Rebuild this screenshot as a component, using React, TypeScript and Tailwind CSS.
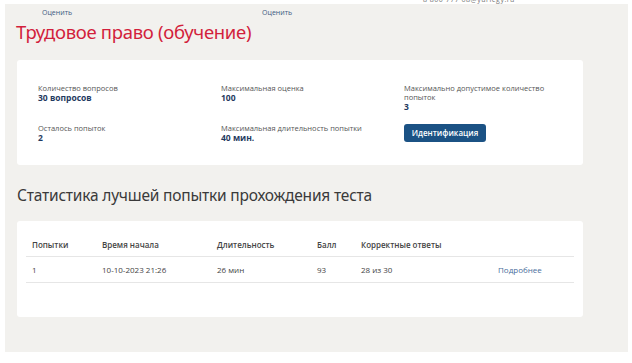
import React from "react";

const info = "font-['Open_Sans',sans-serif]";

function Field({ label, value }: { label: React.ReactNode; value: string }) {
  return (
    <div className="flex flex-col">
      <div className="text-[7.5px] leading-[9px] text-[#555]">{label}</div>
      <div className="text-[8.5px] leading-[10px] font-bold text-[#1f3a60]">{value}</div>
    </div>
  );
}

export default function App() {
  const headers = ["Попытки", "Время начала", "Длительность", "Балл", "Корректные ответы"];
  const row = ["1", "10-10-2023 21:26", "26 мин", "93", "28 из 30"];
  const widths = ["w-[70px]", "w-[115px]", "w-[100px]", "w-[44px]", "w-[137px]"];
  return (
    <div className={`relative w-[632px] h-[363px] bg-white overflow-hidden ${info}`}>
      <div className="absolute left-[423px] top-[-5px] text-[7px] leading-[9px] text-[#777] tracking-[0.5px]">
        8 800 777 68@yurlegy.ru
      </div>
      <div className="relative ml-[5px] mt-[4px] w-[623px] h-[348px] bg-[#f2f1ee]">
        <div className="flex h-[14px] items-end text-[7px] text-[#3b5a82]">
          <span className="ml-[37px]">Оценить</span>
          <span className="ml-[190px]">Оценить</span>
        </div>
        <h1 className="ml-[11px] mt-[3px] text-[18.5px] leading-[22px] text-[#d21f3c] font-['Noto_Sans',sans-serif] tracking-[-0.3px]">
          Трудовое право (обучение)
        </h1>
        <div className="ml-[12px] mt-[17px] w-[566px] h-[105px] bg-white rounded-[3px] pl-[21px] pt-[24px] flex">
          <div className="w-[183px] flex flex-col gap-[21px]">
            <Field label="Количество вопросов" value="30 вопросов" />
            <Field label="Осталось попыток" value="2" />
          </div>
          <div className="w-[183px] flex flex-col gap-[21px]">
            <Field label="Максимальная оценка" value="100" />
            <Field label="Максимальная длительность попытки" value="40 мин." />
          </div>
          <div className="flex flex-col">
            <Field label={<>Максимально допустимое количество<br />попыток</>} value="3" />
            <button className="mt-[12px] w-[82px] h-[18px] rounded-[3px] bg-[#1b5284] text-white text-[8px] font-semibold flex items-center justify-center">
              Идентификация
            </button>
          </div>
        </div>
        <h2 className="ml-[12px] mt-[20px] text-[15.5px] leading-[20px] text-[#3a3a3a] font-['Noto_Sans',sans-serif] tracking-[-0.2px]">
          Статистика лучшей попытки прохождения теста
        </h2>
        <div className="ml-[12px] mt-[16px] w-[566px] h-[96px] bg-white rounded-[3px] pt-[18px] px-[9px]">
          <div className="w-[548px] h-[18px] flex items-start border-b border-[#e6e6e6] pl-[6px] text-[8px] font-semibold text-[#444]">
            {headers.map((c, i) => (
              <span key={i} className={widths[i]}>{c}</span>
            ))}
          </div>
          <div className="w-[548px] h-[26px] flex items-center border-b border-[#e6e6e6] pl-[6px] text-[8px] text-[#444]">
            {row.map((c, i) => (
              <span key={i} className={widths[i]}>{c}</span>
            ))}
            <span className="text-[#4a6d9c]">Подробнее</span>
          </div>
        </div>
      </div>
    </div>
  );
}
